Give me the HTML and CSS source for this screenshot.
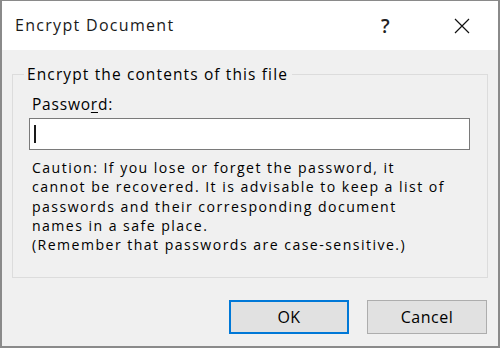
FILE: index.html
```html
<!DOCTYPE html>
<html>
<head>
<meta charset="utf-8">
<link rel="stylesheet" href="styles.css">
</head>
<body>
<div class="window">
  <div class="titlebar">
    <span class="title">Encrypt Document</span>
    <span class="help">?</span>
    <span class="close">
      <svg width="16" height="16" viewBox="0 0 16 16"><path d="M1 1 L15 15 M15 1 L1 15" stroke="#111" stroke-width="1.2" fill="none"/></svg>
    </span>
  </div>
  <div class="body">
    <fieldset class="group">
      <legend class="legend">Encrypt the contents of this file</legend>
      <div class="label">Passwo<u>r</u>d:</div>
      <div class="input"><span class="caret"></span></div>
      <p class="caution">Caution: If you lose or forget the password, it<br>cannot be recovered. It is advisable to keep a list of<br>passwords and their corresponding document<br>names in a safe place.<br>(Remember that passwords are case-sensitive.)</p>
    </fieldset>
    <div class="buttons">
      <button class="btn btn-default">OK</button>
      <button class="btn">Cancel</button>
    </div>
  </div>
</div>
</body>
</html>
```
FILE: styles.css
```css
html, body {
  margin: 0;
  padding: 0;
}
body {
  width: 500px;
  height: 348px;
  font-family: "Open Sans", "Noto Sans", sans-serif;
  font-size: 15.5px;
  letter-spacing: 0.8px;
  color: #000;
}
.window {
  box-sizing: border-box;
  width: 500px;
  height: 348px;
  border: 2px solid #8a8a8a;
  border-top-width: 1px;
  background: #f0f0f0;
  display: flex;
  flex-direction: column;
}
.titlebar {
  height: 49px;
  background: #fff;
  display: flex;
  align-items: center;
  padding-left: 13px;
}
.title {
  font-size: 16px;
  letter-spacing: 1.3px;
  flex: 1;
  margin-top: -2px;
  color: #1a1a1a;
}
.help {
  font-size: 19px;
  font-weight: 600;
  letter-spacing: 0;
  width: 11px;
  margin-right: 62px;
  color: #222;
}
.close {
  width: 16px;
  height: 16px;
  margin-right: 28px;
  display: flex;
}
.body {
  flex: 1;
  display: flex;
  flex-direction: column;
  padding: 15px 10px 0 10px;
}
.group {
  margin: 0;
  border: 1px solid #dcdcdc;
  padding: 12px 17px 7px 16px;
  height: 213px;
  box-sizing: border-box;
}
.legend {
  padding: 0 4px 0 3px;
  margin-left: -5px;
  line-height: 18px;
  letter-spacing: 1.12px;
}
.label {
  line-height: 18px;
  padding-left: 3px;
}
.label u {
  text-decoration-thickness: 1px;
  text-underline-offset: 2px;
}
.input {
  margin-top: 5px;
  height: 32px;
  box-sizing: border-box;
  border: 1px solid #7a7a7a;
  background: #fff;
  display: flex;
  align-items: center;
  padding-left: 4px;
}
.caret {
  width: 2px;
  height: 18px;
  background: #1a1a1a;
}
.caution {
  margin: 8px 0 0 3px;
  white-space: nowrap;
  font-size: 14.1px;
  letter-spacing: 1.45px;
  line-height: 19.25px;
}
.buttons {
  display: flex;
  justify-content: flex-end;
  gap: 18px;
  margin-top: 22px;
  margin-right: 1px;
}
.btn {
  font-family: inherit;
  font-size: 16px;
  letter-spacing: 0.5px;
  width: 120px;
  height: 34px;
  box-sizing: border-box;
  background: #e1e1e1;
  border: 1px solid #adadad;
  color: #000;
  padding: 0;
}
.btn-default {
  border: 2px solid #0078d7;
}
```
